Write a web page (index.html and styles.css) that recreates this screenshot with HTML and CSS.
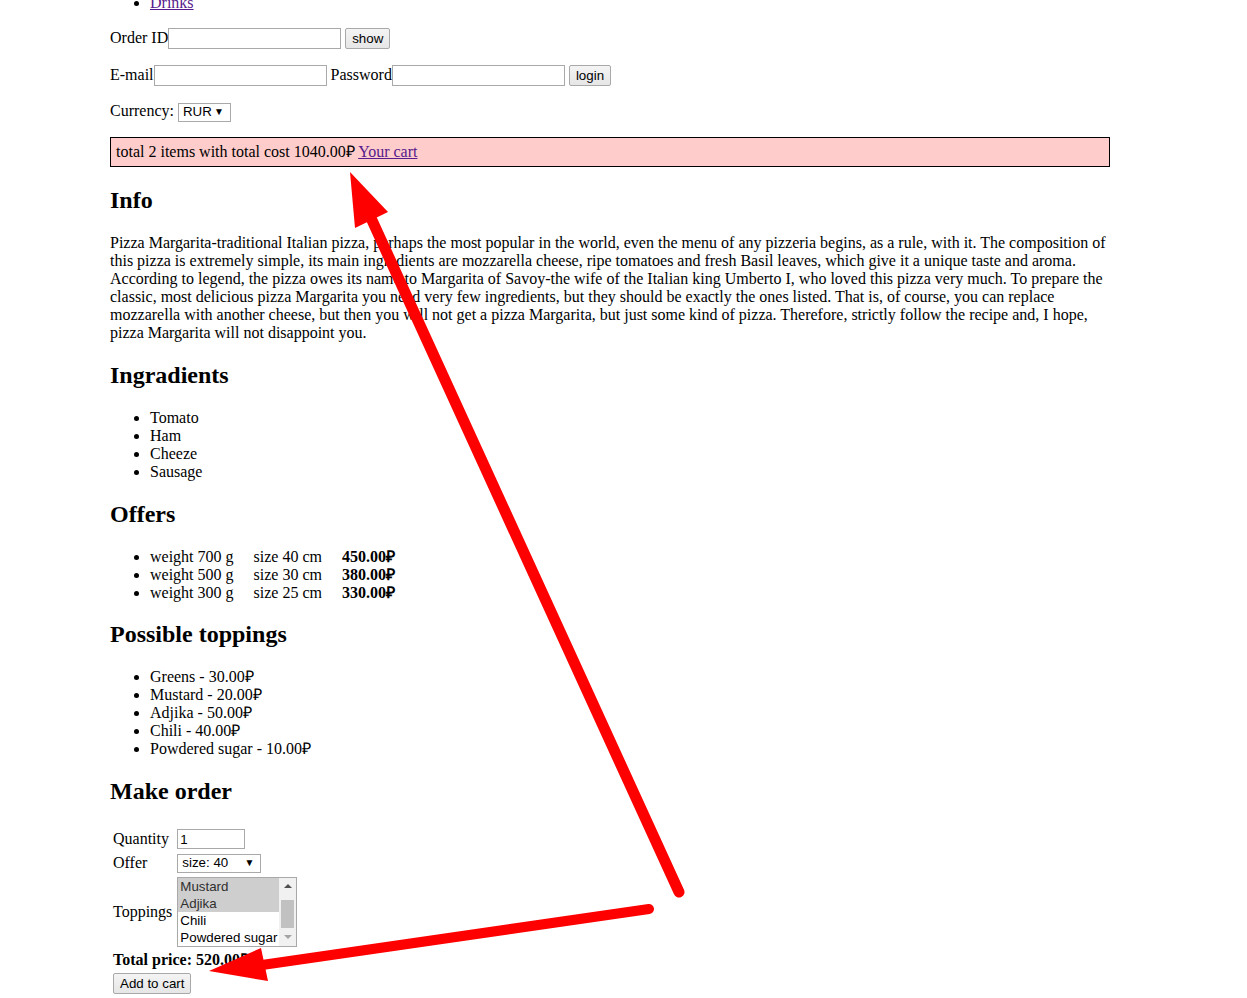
FILE: index.html
```html
<!DOCTYPE html>
<html lang="en">
<head>
<meta charset="utf-8">
<title>Pizza Margarita</title>
<link rel="stylesheet" href="styles.css">
</head>
<body>
<div class="page">
  <ul class="nav">
    <li><a href="#" class="visited">Drinks</a></li>
  </ul>

  <p class="row">Order ID<input type="text" class="field"> <button class="btn">show</button></p>

  <p class="row">E-mail<input type="text" class="field"> Password<input type="password" class="field"> <button class="btn">login</button></p>

  <p class="row row-cur">Currency: <span class="sel sel-cur"><select><option>RUR</option><option>USD</option><option>EUR</option></select></span></p>

  <div class="cart">total 2 items with total cost 1040.00&#8381; <a href="#" class="visited">Your cart</a></div>

  <h2 class="first">Info</h2>
  <p>Pizza Margarita-traditional Italian pizza, perhaps the most popular in the world, even the menu of any pizzeria begins, as a rule, with it. The composition of this pizza is extremely simple, its main ingredients are mozzarella cheese, ripe tomatoes and fresh Basil leaves, which give it a unique taste and aroma. According to legend, the pizza owes its name to Margarita of Savoy-the wife of the Italian king Umberto I, who loved this pizza very much. To prepare the classic, most delicious pizza Margarita you need very few ingredients, but they should be exactly the ones listed. That is, of course, you can replace mozzarella with another cheese, but then you will not get a pizza Margarita, but just some kind of pizza. Therefore, strictly follow the recipe and, I hope, pizza Margarita will not disappoint you.</p>

  <h2>Ingradients</h2>
  <ul>
    <li>Tomato</li>
    <li>Ham</li>
    <li>Cheeze</li>
    <li>Sausage</li>
  </ul>

  <h2>Offers</h2>
  <ul class="offers">
    <li><span class="w">weight 700 g</span><span class="s">size 40 cm</span><b>450.00&#8381;</b></li>
    <li><span class="w">weight 500 g</span><span class="s">size 30 cm</span><b>380.00&#8381;</b></li>
    <li><span class="w">weight 300 g</span><span class="s">size 25 cm</span><b>330.00&#8381;</b></li>
  </ul>

  <h2>Possible toppings</h2>
  <ul>
    <li>Greens - 30.00&#8381;</li>
    <li>Mustard - 20.00&#8381;</li>
    <li>Adjika - 50.00&#8381;</li>
    <li>Chili - 40.00&#8381;</li>
    <li>Powdered sugar - 10.00&#8381;</li>
  </ul>

  <h2>Make order</h2>
  <form class="order">
    <table>
      <tr>
        <td>Quantity</td>
        <td><input type="text" class="qty" value="1"></td>
      </tr>
      <tr>
        <td>Offer</td>
        <td><span class="sel sel-offer"><select><option>size: 40</option><option>size: 30</option><option>size: 25</option></select></span></td>
      </tr>
      <tr>
        <td>Toppings</td>
        <td>
          <div class="listbox" role="listbox" aria-multiselectable="true">
            <div class="opts">
              <div class="opt selected" role="option" aria-selected="true">Mustard</div>
              <div class="opt selected" role="option" aria-selected="true">Adjika</div>
              <div class="opt" role="option">Chili</div>
              <div class="opt" role="option">Powdered sugar</div>
            </div>
            <div class="sbar">
              <div class="sb-up"><span class="tri-up"></span></div>
              <div class="sb-track"><div class="sb-thumb"></div></div>
              <div class="sb-down"><span class="tri-down"></span></div>
            </div>
          </div>
        </td>
      </tr>
      <tr>
        <td colspan="2"><b>Total price: 520.00&#8381;</b></td>
      </tr>
      <tr>
        <td colspan="2"><button type="button" class="btn">Add to cart</button></td>
      </tr>
    </table>
  </form>
</div>

<svg class="annot" width="1247" height="998" viewBox="0 0 1247 998" aria-hidden="true">
  <line x1="679" y1="892" x2="371" y2="218" stroke="#ff0000" stroke-width="11" stroke-linecap="round"/>
  <polygon points="350,172 355,228 388,212" fill="#ff0000"/>
  <line x1="649" y1="909" x2="262" y2="965" stroke="#ff0000" stroke-width="10" stroke-linecap="round"/>
  <polygon points="209,971 261,948 268,981" fill="#ff0000"/>
</svg>
</body>
</html>
```

FILE: styles.css
```css
html, body {
  margin: 0;
  padding: 0;
  background: #ffffff;
}

body {
  font-family: "Liberation Serif", "Times New Roman", serif;
  font-size: 16px;
  line-height: 18px;
  color: #000000;
}

.page {
  width: 1000px;
  margin: -6px 0 0 110px;
}

.nav {
  margin-top: 0;
}

ul {
  margin: 16px 0;
  padding-left: 40px;
}

p {
  margin: 16px 0;
}

.row-cur {
  margin-bottom: 15px;
}

a.visited {
  color: #551a8b;
}

h2 {
  font-size: 24px;
  line-height: 27px;
  font-weight: bold;
  margin: 19.92px 0;
}

h2.first {
  margin-top: 20.5px;
}

.field {
  box-sizing: border-box;
  width: 173px;
  height: 21px;
  border: 1px solid #a9a9a9;
  padding: 1px 2px;
  font-family: "Liberation Sans", Arial, sans-serif;
  font-size: 13.33px;
  margin: 0;
  vertical-align: baseline;
}

.btn {
  box-sizing: border-box;
  height: 21px;
  padding: 1px 6px;
  margin: 0;
  border: 1px solid #a9a9a9;
  border-radius: 2px;
  background: linear-gradient(#f4f4f4, #e6e6e6);
  color: #000000;
  font-family: "Liberation Sans", Arial, sans-serif;
  font-size: 13.33px;
}

.sel {
  box-sizing: border-box;
  display: inline-flex;
  align-items: center;
  height: 19px;
  border: 1px solid #a9a9a9;
  background: #ffffff;
  padding: 0 6px 0 4px;
  font-family: "Liberation Sans", Arial, sans-serif;
  font-size: 13.33px;
  vertical-align: baseline;
}

.sel select {
  appearance: none;
  -webkit-appearance: none;
  border: none;
  background: transparent;
  font: inherit;
  padding: 0;
  margin: 0;
  flex: 1;
  min-width: 0;
  color: #000000;
  outline: none;
}

.sel::after {
  content: "\25BC";
  font-size: 10px;
  line-height: 10px;
}

.sel-cur {
  width: 53px;
}

.sel-offer {
  width: 84px;
}

.cart {
  background: #ffcccc;
  border: 1px solid #000000;
  padding: 5px;
}

.offers .w,
.offers .s {
  margin-right: 20px;
}

.order {
  margin: 0;
  padding-top: 1px;
}

.order table {
  border-spacing: 2px;
}

.order td {
  padding: 1px;
}

.qty,
.sel-offer,
.listbox {
  margin-left: 1px;
}

.qty {
  box-sizing: border-box;
  width: 68px;
  height: 20px;
  border: 1px solid #a9a9a9;
  padding: 1px 2px;
  font-family: "Liberation Sans", Arial, sans-serif;
  font-size: 13.33px;
}

.listbox {
  box-sizing: border-box;
  width: 120px;
  height: 70px;
  border: 1px solid #a9a9a9;
  display: flex;
  background: #ffffff;
  font-family: "Liberation Sans", Arial, sans-serif;
  font-size: 13.33px;
  line-height: 17px;
}

.opts {
  flex: 1;
  overflow: hidden;
}

.opt {
  height: 17px;
  padding: 0 2px;
  white-space: nowrap;
  color: #000000;
}

.opt.selected {
  background: #cecece;
  color: #303030;
}

.sbar {
  width: 17px;
  background: #f1f1f1;
  display: flex;
  flex-direction: column;
}

.sb-up,
.sb-down {
  height: 17px;
  display: flex;
  align-items: center;
  justify-content: center;
}

.sb-track {
  flex: 1;
  display: flex;
  flex-direction: column;
  justify-content: flex-end;
  padding: 0 2px;
}

.sb-thumb {
  height: 28px;
  background: #c1c1c1;
  margin-bottom: 1px;
}

.tri-up {
  width: 0;
  height: 0;
  border-left: 4px solid transparent;
  border-right: 4px solid transparent;
  border-bottom: 4px solid #505050;
}

.tri-down {
  width: 0;
  height: 0;
  border-left: 4px solid transparent;
  border-right: 4px solid transparent;
  border-top: 4px solid #a3a3a3;
}

.annot {
  position: absolute;
  top: 0;
  left: 0;
  pointer-events: none;
}
```
